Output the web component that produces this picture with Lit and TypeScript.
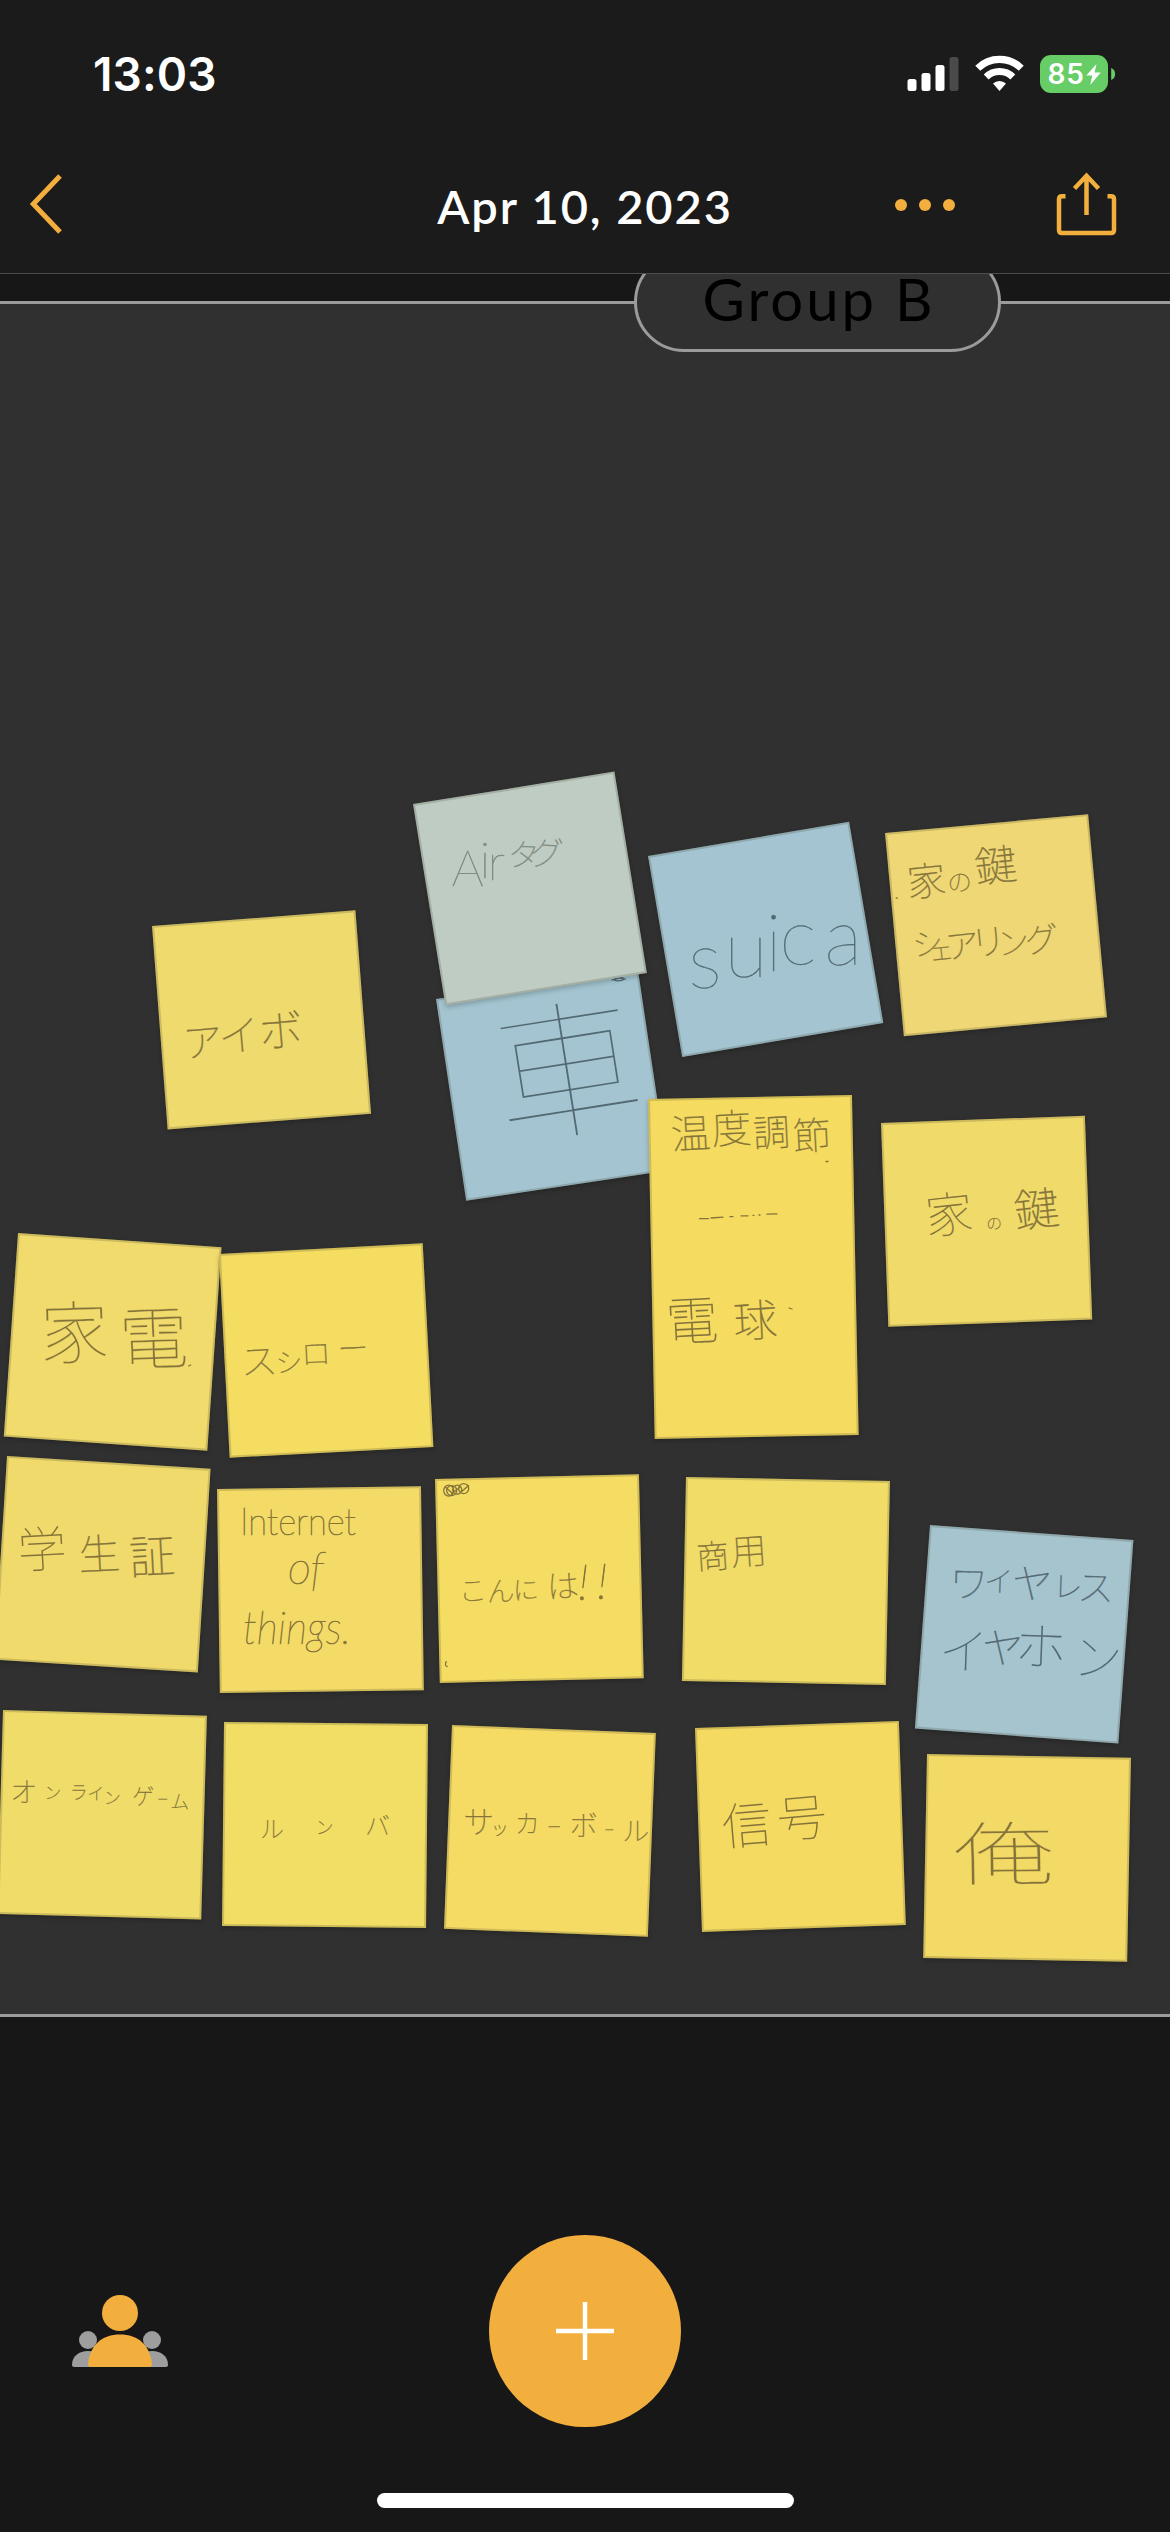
import { LitElement, html, svg, css, nothing } from "lit";
import { customElement, property } from "lit/decorators.js";
import { styleMap } from "lit/directives/style-map.js";

/** One handwritten character: text, centre x, centre y, em size. */
type Glyph = [string, number, number, number];

/** A run of handwriting in a Latin script: text, x list, baseline y list, em size, length. */
interface Run {
  t: string;
  x: string;
  y: string;
  size: number;
  len?: number;
  italic?: boolean;
}

interface Note {
  x: number;
  y: number;
  angle: number;
  height?: number;
  fill: string;
  ink?: string;
  tilt?: number;
  words?: Glyph[][];
  runs?: Run[];
  marks?: string[];
  stretch?: [number, number];
}

const INK = "#85743a";
const INK_BLUE = "#536973";

const NOTES: Note[] = [
  {
    x: 436, y: 999, angle: -8.5, fill: "#a3c4d0", ink: INK_BLUE, tilt: -9,
    words: [[["車", 567, 1069, 150]]],
    marks: ["M612 980 q6 -3 13 -1 q-6 3 -11 1 q5 -3 9 -2"],
  },
  {
    x: 413.3, y: 804.3, angle: -9.15, fill: "#bfccc3", ink: "#828c85", tilt: 3,
    words: [[["タ", 524, 855, 32], ["グ", 547, 853, 34]]],
    runs: [{ t: "Air", x: "452 480 488", y: "886 878 880", size: 50 }],
  },
  {
    x: 647.7, y: 856, angle: -9.65, fill: "#a3c4d0", ink: INK_BLUE,
    runs: [{ t: "suica", x: "688 724 765 779 824", y: "988 977 971 965 965", size: 80 }],
  },
  {
    x: 885.3, y: 833, angle: -5.3, fill: "#eed774", tilt: -6,
    words: [
      [["家", 926.7, 880.4, 39], ["の", 959.7, 881.7, 25], ["鍵", 996, 865, 42]],
      [["シ", 928, 943.5, 31], ["ェ", 941.5, 950, 26], ["ア", 962.5, 945, 34], ["リ", 988.5, 941, 36], ["ン", 1013.5, 942, 32], ["グ", 1042, 939, 34]],
    ],
    marks: ["M896.5 898 h1"],
  },
  {
    x: 152, y: 925.7, angle: -4.4, fill: "#efda6e", tilt: -5,
    words: [[["ア", 202.7, 1041, 40], ["イ", 239, 1034.7, 42], ["ボ", 281, 1029.5, 44]]],
  },
  {
    x: 881, y: 1123, angle: -2.06, fill: "#f0da6a", tilt: -6,
    words: [[["家", 949, 1214, 48], ["の", 994, 1223, 16], ["鍵", 1036.7, 1208.6, 45]]],
  },
  {
    x: 648, y: 1099, angle: -1.13, height: 340, fill: "#f5db60", tilt: -3,
    words: [
      [["温", 690.7, 1133, 40], ["度", 731.5, 1128, 40], ["調", 771.5, 1132, 37], ["節", 811.7, 1135, 38]],
      [["電", 692, 1320, 53], ["球", 755, 1320, 44]],
    ],
    marks: [
      "M826 1161.5 l2 0", "M789 1308 l3 1",
      "M699.5 1218.6 h9 M711 1218 l12 -.8 M730 1216.6 h3 M741 1215.8 h7 M753 1215.3 h1 M759 1215 h1 M767 1214.2 l10 -.4",
    ],
  },
  {
    x: 18.3, y: 1233, angle: 4, fill: "#f1db6c", tilt: -2,
    words: [[["家", 75, 1332, 69], ["電", 154, 1337.5, 70]]],
    marks: ["M189 1366 l2 -1"],
  },
  {
    x: 219, y: 1254, angle: -3, fill: "#f5dd62", tilt: -3,
    words: [[["ス", 259, 1360.5, 37], ["シ", 289, 1362, 27], ["ロ", 316, 1353, 30], ["ー", 353, 1348, 31]]],
  },
  {
    x: 7, y: 1456.3, angle: 3.6, fill: "#f1da6c", tilt: -3,
    words: [[["学", 42, 1549, 49], ["生", 99, 1554, 42], ["証", 152, 1556, 46]]],
  },
  {
    x: 217, y: 1489.3, angle: -0.8, fill: "#f4da66",
    runs: [
      { t: "Internet", x: "240", y: "1535", size: 37, len: 116 },
      { t: "of", x: "288", y: "1584", size: 46, len: 36, italic: true },
      { t: "things.", x: "243", y: "1644", size: 46, len: 108, italic: true },
    ],
  },
  {
    x: 435.3, y: 1479.4, angle: -1.35, fill: "#f5dc62", tilt: -3,
    words: [[["こ", 473, 1590.5, 28], ["ん", 500.7, 1591, 28], ["に", 526, 1590, 26], ["は", 563, 1586, 32]]],
    runs: [{ t: "!!", x: "578 597", y: "1600 1599", size: 50, italic: true }],
    marks: [
      "M444 1491 a5 5.5 0 1 1 10 0 a5 5.5 0 1 1 -10 0 M447 1491 a5 5 0 1 1 10 0 a5 5 0 1 1 -10 0 M453 1490 a4.5 4.5 0 1 1 9 0 a4.5 4.5 0 1 1 -9 0 M459 1489 a5 5 0 1 1 10 0 a5 5 0 1 1 -10 0 M446 1488 l7 6 M462 1492 l7 -6 M452 1494 l8 -6",
      "M446.5 1662 q-2 4 1 5",
    ],
  },
  {
    x: 686.3, y: 1477.3, angle: 1.15, fill: "#f1dc68", tilt: -4,
    words: [[["商", 713, 1556, 33], ["用", 749, 1551, 36]]],
  },
  {
    x: 930.3, y: 1525, angle: 4.25, fill: "#a6c4ce", ink: INK_BLUE, tilt: 2,
    words: [
      [["ワ", 969, 1583, 39], ["イ", 999, 1581, 29], ["ヤ", 1032.5, 1583, 41], ["レ", 1068, 1586, 30], ["ス", 1096, 1587, 37]],
      [["イ", 964, 1650.5, 50], ["ヤ", 1003, 1647.5, 42], ["ホ", 1041, 1646, 52], ["ン", 1098, 1657, 50]],
    ],
  },
  {
    x: 927, y: 1754.4, angle: 1.07, fill: "#f3d966", tilt: -1,
    words: [[["俺", 1003.5, 1853.5, 70]]],
    stretch: [1.45, 1003.5],
  },
  {
    x: 3.3, y: 1710.3, angle: 1.6, fill: "#f0dc69", tilt: 0,
    words: [[["オ", 24, 1792, 27], ["ン", 53, 1793, 17], ["ラ", 79, 1793, 18], ["イ", 96, 1794, 17], ["ン", 112.5, 1798, 17], ["ゲ", 143.5, 1796, 22], ["ー", 163, 1800, 11], ["ム", 180, 1802, 19]]],
  },
  {
    x: 224, y: 1722, angle: 0.55, fill: "#f2de65", tilt: 0,
    words: [[["ル", 272, 1828.5, 24], ["ン", 324.5, 1827, 18], ["バ", 377.5, 1825, 25]]],
  },
  {
    x: 452.3, y: 1725, angle: 2.25, fill: "#f5db64", tilt: 0,
    words: [[["サ", 479, 1821, 31], ["ッ", 500, 1828, 18], ["カ", 527.5, 1823, 25], ["ー", 554.5, 1827, 14], ["ボ", 584, 1825, 28], ["ー", 609.5, 1830, 10], ["ル", 636, 1831, 27]]],
  },
  {
    x: 695, y: 1728.3, angle: -1.96, fill: "#f5da62", tilt: -5,
    words: [[["信", 746.7, 1825, 50], ["号", 801.7, 1817.5, 50]]],
  },
];

@customElement("sticky-note")
class StickyNote extends LitElement {
  @property({ attribute: false }) note!: Note;

  static styles = css`
    :host {
      display: block;
      position: absolute;
    }
    .sheet {
      position: relative;
      box-sizing: border-box;
      width: 204px;
      height: 204px;
      transform-origin: 0 0;
      border: 2px solid rgba(60, 60, 40, 0.2);
      box-shadow: 0 2px 5px rgba(0, 0, 0, 0.22);
    }
    .ink {
      position: absolute;
      top: -2px;
      left: -2px;
      width: 1px;
      height: 1px;
      overflow: visible;
    }
    .hand {
      font-family: "Noto Sans CJK JP", sans-serif;
      font-weight: 100;
    }
    .latin {
      font-family: Lato, "Noto Sans CJK JP", sans-serif;
      font-weight: 100;
    }
    .slanted {
      font-style: italic;
    }
    .mark {
      fill: none;
      stroke-width: 1.3;
      stroke-linecap: round;
    }
  `;

  /** Rotates each glyph about its own centre; large glyphs are trimmed so the pen width stays even. */
  private glyph([char, cx, cy, size]: Glyph, tilt: number, ink: string, paper: string) {
    const a = (tilt * Math.PI) / 180;
    const dx = size / 2;
    const dy = -0.38 * size;
    const x = cx - (dx * Math.cos(a) - dy * Math.sin(a));
    const y = cy - (dx * Math.sin(a) + dy * Math.cos(a));
    const large = size > 46;
    const width = large ? Math.max(0, (size - 60) * 0.029) : 0.3;
    return svg`<tspan x=${x.toFixed(1)} y=${y.toFixed(1)} rotate=${tilt} font-size=${size} stroke=${large ? paper : ink} stroke-width=${width.toFixed(2)}>${char}</tspan>`;
  }

  render() {
    const n = this.note;
    const ink = n.ink ?? INK;
    const [sx, ox] = n.stretch ?? [1, 0];
    return html`
      <div
        class="sheet"
        style=${styleMap({
          height: `${n.height ?? 204}px`,
          background: n.fill,
          transform: `rotate(${n.angle}deg)`,
        })}
      >
        <svg class="ink" fill=${ink} stroke="none">
          <g transform="rotate(${-n.angle}) translate(${-n.x} ${-n.y})">
            <g transform="translate(${ox * (1 - sx)} 0) scale(${sx} 1)">
              ${(n.words ?? []).map(
                (w) => svg`<text class="hand">${w.map((g) => this.glyph(g, n.tilt ?? 0, ink, n.fill))}</text>`
              )}
            </g>
            ${(n.runs ?? []).map(
              (r) => svg`<text class=${r.italic ? "latin slanted" : "latin"} x=${r.x} y=${r.y} font-size=${r.size}
                stroke=${ink} stroke-width=${r.size > 60 ? 0.3 : 0.7} textLength=${r.len ?? nothing} lengthAdjust="spacingAndGlyphs">${r.t}</text>`
            )}
            ${(n.marks ?? []).map((d) => svg`<path class="mark" stroke=${ink} d=${d}></path>`)}
          </g>
        </svg>
      </div>
    `;
  }
}

@customElement("app-root")
class AppRoot extends LitElement {
  static styles = css`
    :host {
      display: block;
      width: 1170px;
      height: 2532px;
      position: relative;
      overflow: hidden;
      background: #171717;
      color: #fff;
      font-family: Lato, "Liberation Sans", sans-serif;
    }
    .canvas {
      position: absolute;
      inset: 0;
      overflow: hidden;
    }
    .group {
      position: absolute;
      box-sizing: border-box;
      top: 301px;
      left: -10px;
      right: -10px;
      height: 1716px;
      background: #303030;
      border: 3px solid #9b9b9b;
    }
    .group-name {
      position: absolute;
      box-sizing: border-box;
      top: 252px;
      left: 634px;
      width: 367px;
      height: 100px;
      border: 3px solid #9b9b9b;
      border-radius: 50px;
      background: #303030;
      color: #000;
      font-size: 58px;
      line-height: 88px;
      letter-spacing: 3px;
      text-indent: 3px;
      text-align: center;
      white-space: nowrap;
    }
    .chrome {
      position: relative;
      display: flex;
      flex-direction: column;
      justify-content: space-between;
      height: 100%;
    }
    .header {
      box-sizing: border-box;
      height: 274px;
      background: #1b1b1b;
      border-bottom: 1px solid #4c4c4c;
    }
    .status {
      display: flex;
      align-items: center;
      justify-content: space-between;
      box-sizing: border-box;
      height: 148px;
      padding: 0 54px 0 93px;
    }
    .time {
      font-family: Inter, "Liberation Sans", sans-serif;
      font-weight: 600;
      font-size: 46px;
      line-height: 56px;
      letter-spacing: 0.1px;
    }
    .icons {
      display: flex;
      align-items: center;
      gap: 16px;
    }
    .battery {
      display: flex;
      align-items: center;
    }
    .level {
      display: flex;
      align-items: center;
      justify-content: center;
      gap: 1px;
      width: 68px;
      height: 38px;
      border-radius: 11px;
      background: #67ce67;
      font-family: Inter, sans-serif;
      font-weight: 600;
      font-size: 28px;
      line-height: 38px;
      letter-spacing: 0.8px;
    }
    .nav {
      display: grid;
      grid-template-columns: 1fr auto 1fr;
      align-items: center;
      height: 125px;
      box-sizing: border-box;
      padding: 0 27px 14px 27px;
    }
    .title {
      font-weight: 600;
      font-size: 47px;
      line-height: 56px;
      letter-spacing: 1.9px;
      white-space: nowrap;
      padding-top: 5px;
    }
    .actions {
      display: flex;
      align-items: center;
      justify-content: flex-end;
      gap: 99px;
      padding-right: 24px;
    }
    .dots {
      padding-top: 3px;
    }
    .icon {
      display: block;
    }
    .footer {
      display: flex;
      flex-direction: column;
      align-items: center;
      padding-bottom: 24px;
    }
    .tools {
      display: grid;
      grid-template-columns: 1fr auto 1fr;
      align-items: center;
      align-self: stretch;
      padding: 0 72px;
      margin-bottom: 66px;
    }
    .add {
      display: flex;
      align-items: center;
      justify-content: center;
      width: 192px;
      height: 192px;
      border-radius: 50%;
      background: #f3af3d;
    }
    .home {
      width: 417px;
      height: 15px;
      border-radius: 8px;
      background: #fff;
    }
  `;

  render() {
    return html`
      <div class="canvas">
        <div class="group"></div>
        <div class="group-name">Group B</div>
        ${NOTES.map(
          (n) => html`<sticky-note .note=${n} style=${styleMap({ left: `${n.x}px`, top: `${n.y}px` })}></sticky-note>`
        )}
      </div>
      <div class="chrome">
        <div class="header">
          <div class="status">
            <div class="time">13:03</div>
            <div class="icons">
              <svg class="icon" width="52" height="38" viewBox="0 0 52 38" fill="#fff">
                <rect x="0.5" y="24" width="9" height="12" rx="2.5"></rect>
                <rect x="14.5" y="18" width="9" height="18" rx="2.5"></rect>
                <rect x="28.5" y="10" width="9" height="26" rx="2.5"></rect>
                <rect x="42.5" y="2" width="9" height="34" rx="2.5" fill="#4a4a4a"></rect>
              </svg>
              <svg class="icon" width="49" height="38" viewBox="0 0 49 38" fill="none" stroke="#fff">
                <path d="M2.8 13.2 A31 31 0 0 1 46.2 13.2" stroke-width="7.2"></path>
                <path d="M11.2 22 A19 19 0 0 1 37.8 22" stroke-width="7"></path>
                <path d="M18 28.6 A9.5 9.5 0 0 1 31 28.6 L24.5 36 Z" fill="#fff" stroke="none"></path>
              </svg>
              <div class="battery">
                <div class="level">
                  <span>85</span>
                  <svg class="icon" width="15" height="21" viewBox="0 0 15 21" fill="#fff">
                    <path d="M10.5 0 L0.3 11.6 H6.3 L4.2 21 L14.7 8.6 H8.6 Z"></path>
                  </svg>
                </div>
                <svg class="icon" width="8" height="12" viewBox="0 0 8 12" fill="#67ce67">
                  <path d="M3.2 0 C8.4 1.5 8.4 10.5 3.2 12 Z"></path>
                </svg>
              </div>
            </div>
          </div>
          <div class="nav">
            <svg class="icon" width="38" height="62" viewBox="0 0 38 62" fill="none" stroke="#f3af3d" stroke-width="5">
              <path d="M33 3 L6.3 31 L33 59"></path>
            </svg>
            <div class="title">Apr 10, 2023</div>
            <div class="actions">
              <svg class="icon dots" width="62" height="12" viewBox="0 0 62 12" fill="#f3af3d">
                <circle cx="7" cy="6" r="6"></circle>
                <circle cx="31" cy="6" r="6"></circle>
                <circle cx="55" cy="6" r="6"></circle>
              </svg>
              <svg class="icon" width="64" height="64" viewBox="0 0 64 64" fill="none" stroke="#f3af3d" stroke-width="4.5">
                <path d="M10.5 24.3 H7 Q4 24.3 4 27.3 V58 Q4 61 7 61 H56 Q59 61 59 58 V27.3 Q59 24.3 56 24.3 H52.5"></path>
                <path d="M31.5 43 V4 M19.5 16.5 L31.5 3.8 L43.5 16.5"></path>
              </svg>
            </div>
          </div>
        </div>
        <div class="footer">
          <div class="tools">
            <svg class="icon" width="96" height="72" viewBox="0 0 96 72" fill="#f3af3d">
              <g fill="#9e9e9e">
                <circle cx="16" cy="45" r="9"></circle>
                <circle cx="80" cy="45" r="9"></circle>
                <path d="M0 70 C0 61 7 56 16 56 C25 56 32 61 32 70 Q32 72 30 72 H2 Q0 72 0 70 Z"></path>
                <path d="M64 70 C64 61 71 56 80 56 C89 56 96 61 96 70 Q96 72 94 72 H66 Q64 72 64 70 Z"></path>
              </g>
              <circle cx="48" cy="18" r="18"></circle>
              <path d="M16 69 C18 50 30 39.5 48 39.5 C66 39.5 78 50 80 69 Q80 72 77 72 H19 Q16 72 16 69 Z"></path>
            </svg>
            <div class="add">
              <svg class="icon" width="58" height="58" viewBox="0 0 58 58" stroke="#fff" stroke-width="4.5">
                <path d="M29 0 V58 M0 29 H58"></path>
              </svg>
            </div>
            <span></span>
          </div>
          <div class="home"></div>
        </div>
      </div>
    `;
  }
}
